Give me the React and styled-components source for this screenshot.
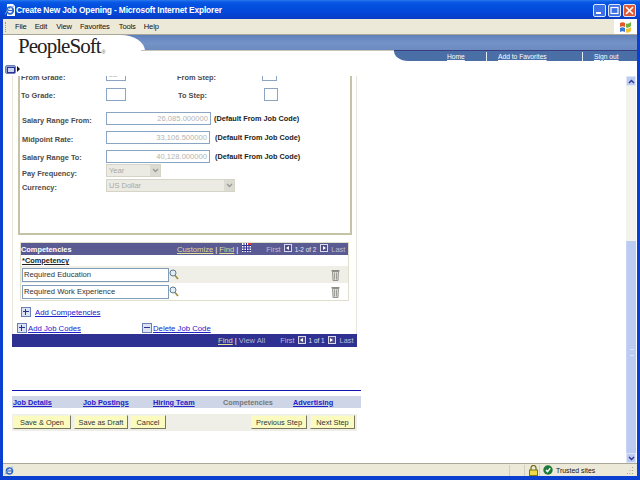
import React from "react";
import styled, { createGlobalStyle } from "styled-components";

const GlobalStyle = createGlobalStyle`
  html, body {
    margin: 0;
    padding: 0;
    background: #fff;
  }
  body {
    font-family: "Liberation Sans", Arial, sans-serif;
    font-size: 7.5px;
    color: #333;
  }
  * {
    box-sizing: border-box;
  }
`;

const Window = styled.div`
  width: 640px;
  height: 480px;
  display: flex;
  flex-direction: column;
  overflow: hidden;
  background: #0a3fd0;
  padding: 0 3px 4px;
`;

const TitleBar = styled.div`
  height: 19px;
  margin: 0 -3px;
  padding: 0 4px;
  display: flex;
  align-items: center;
  background: linear-gradient(#2a78ee 0, #0a5ae6 2px, #0451e0 5px, #0346d8 13px, #0a3cc4 19px);
`;

const TitleText = styled.div`
  flex: 1;
  color: #fff;
  font-weight: bold;
  font-size: 8.4px;
  letter-spacing: -0.15px;
  white-space: nowrap;
`;

const WinButton = styled.div`
  width: 13px;
  height: 13px;
  margin: 2px 0 0 2px;
  border: 1px solid #dfe8fb;
  border-radius: 2px;
  background: ${(p) => (p.$close ? "#de5a35" : "#3d6fe6")};
  display: flex;
  align-items: center;
  justify-content: center;
`;

const MenuBar = styled.div`
  height: 16px;
  display: flex;
  align-items: center;
  background: #ece9d8;
  border-bottom: 1px solid #a9a794;
  color: #111;
  font-size: 7.6px;
  letter-spacing: -0.15px;
`;

const Grip = styled.div`
  width: 2px;
  height: 10px;
  margin-left: 2px;
  border-left: 1px dotted #a09e8c;
`;

const MenuItem = styled.span`
  margin-left: ${(p) => p.$gap}px;
`;

const FlagBox = styled.div`
  margin-left: auto;
  width: 23px;
  height: 15px;
  background: #fff;
  display: flex;
  align-items: center;
  justify-content: center;
`;

const PageArea = styled.div`
  flex: 1;
  min-height: 0;
  display: flex;
  flex-direction: column;
  background: #fff;
`;

const HeaderBand = styled.div`
  height: 16px;
  background: linear-gradient(#5f80ba, #7494c8 50%, #6a8abf);
  display: flex;
`;

const LogoCell = styled.div`
  width: 142px;
  height: 16px;
  background: #fff;
  border-top-right-radius: 24px 16px;
`;

const HeaderNavRow = styled.div`
  height: 11px;
  display: flex;
`;

const LogoSpace = styled.div`
  flex: 1;
  position: relative;
  &::after {
    content: "";
    position: absolute;
    left: 138px;
    right: 0;
    top: -1px;
    height: 1px;
    background: #c9c5b6;
  }
`;

const Logo = styled.div`
  position: absolute;
  left: 15px;
  top: -17px;
  font-family: "Liberation Serif", serif;
  font-size: 21px;
  letter-spacing: -0.95px;
  color: #222;
  white-space: nowrap;
  sup {
    font-family: "Liberation Sans", sans-serif;
    font-size: 5px;
    letter-spacing: 0;
    color: #666;
    margin-left: 1px;
    vertical-align: -1px;
  }
`;

const NavBar = styled.div`
  width: 243px;
  margin-top: -1px;
  height: 11px;
  background: #4a6ea6;
  border-top: 1px solid #3c3c80;
  border-bottom-left-radius: 14px 10px;
  display: flex;
  align-items: center;
  color: #fff;
  font-size: 6.7px;
`;

const NavLink = styled.span`
  width: ${(p) => p.$w}px;
  padding-left: ${(p) => p.$pad}px;
  height: 9px;
  line-height: 9px;
  border-right: ${(p) => (p.$last ? "none" : "1px solid #e8edf5")};
  text-decoration: underline;
  white-space: nowrap;
`;

const CollapseRow = styled.div`
  height: 14px;
  padding: 3px 0 0 2px;
  display: flex;
  align-items: flex-start;
`;

const CollapseIcon = styled.div`
  width: 11px;
  height: 9px;
  background: #8ea4d8;
  border: 1px solid #6c7fb8;
  border-radius: 2px;
  display: flex;
  align-items: center;
  justify-content: center;
  &::before {
    content: "";
    width: 6px;
    height: 4px;
    border: 1px solid #2e3192;
    background: #c8d4f0;
  }
`;

const CollapseArrow = styled.div`
  margin: 1px 0 0 1px;
  width: 0;
  height: 0;
  border-left: 3px solid #111;
  border-top: 3px solid transparent;
  border-bottom: 3px solid transparent;
`;

const Frame = styled.div`
  flex: 1;
  min-height: 0;
  display: flex;
  overflow: hidden;
`;

const Main = styled.div`
  flex: 1;
  padding-left: 9px;
  display: flex;
  flex-direction: column;
`;

const Page = styled.div`
  width: 345px;
  height: 271px;
  overflow: hidden;
  padding: 0 1px;
  box-shadow: inset 1px 0 #e8e6dc, inset -1px 0 #e8e6dc;
  display: flex;
  flex-direction: column;
`;

const FormBox = styled.div`
  margin: -10px 4px 0 5px;
  height: 169px;
  flex-shrink: 0;
  border: 2px solid #c6c2a6;
  padding-left: 1px;
  display: flex;
  flex-direction: column;
`;

const FormRow = styled.div`
  margin-top: ${(p) => p.$top}px;
  height: 13px;
  display: grid;
  grid-template-columns: ${(p) => p.$cols};
  align-items: center;
  flex-shrink: 0;
`;

const Label = styled.label`
  font-weight: bold;
  font-size: 7.4px;
  color: #4c4c4c;
  white-space: nowrap;
  padding-left: ${(p) => p.$pad || 0}px;
  transform: translateY(${(p) => p.$shift || 0}px);
`;

const TextInput = styled.div`
  width: ${(p) => p.$w}px;
  height: 13px;
  border: 1px solid #8aa4c4;
  background: #fff;
  color: #b4b4b0;
  font-size: 7.6px;
  line-height: 11px;
  text-align: ${(p) => (p.$left ? "left" : "right")};
  padding: 0 2px;
  overflow: hidden;
`;

const Note = styled.span`
  padding-left: ${(p) => p.$pad}px;
  font-weight: bold;
  font-size: 7.3px;
  color: #222;
  white-space: nowrap;
`;

const SelectBox = styled.div`
  width: ${(p) => p.$w}px;
  height: 13px;
  background: #ecebe3;
  border: 1px solid #d6d4c6;
  color: #a8a8a4;
  font-size: 7.5px;
  line-height: 11px;
  padding-left: 2px;
  display: flex;
  justify-content: space-between;
`;

const SelectArrow = styled.div`
  width: 10px;
  background: #dcdbd2;
  display: flex;
  align-items: center;
  justify-content: center;
`;

const Grid = styled.div`
  margin: 7px 0 0 7px;
  width: 329px;
  height: 59px;
  flex-shrink: 0;
  border: 1px solid #e0dfcc;
  display: flex;
  flex-direction: column;
`;

const GridHead = styled.div`
  height: 12px;
  background: #5b5b93;
  display: flex;
  align-items: center;
  color: #c0c0d6;
  font-size: 7.7px;
  white-space: nowrap;
`;

const GridTitle = styled.span`
  width: 156px;
  color: #fff;
  font-weight: bold;
  font-size: 7.4px;
`;

const YellowLink = styled.span`
  color: #dcdc98;
  text-decoration: underline;
`;

const Pipe = styled.span`
  margin: 0 2px;
  color: #fff;
`;

const PagerText = styled.span`
  margin-left: ${(p) => p.$left || 0}px;
  color: #bcbcd2;
  font-size: 7.4px;
`;

const PagerCount = styled.span`
  margin-left: 3px;
  color: #e4e4f0;
  font-size: 6.4px;
`;

const ArrowBtn = styled.span`
  display: inline-flex;
  align-items: center;
  justify-content: center;
  width: 8px;
  height: 8px;
  margin-left: ${(p) => p.$left}px;
  margin-top: -2px;
  border: 1px solid #d8d8e8;
  background: #4c4c8c;
  &::before {
    content: "";
    width: 0;
    height: 0;
    border-top: 2px solid transparent;
    border-bottom: 2px solid transparent;
    ${(p) => (p.$next ? "border-left: 3px solid #fff;" : "border-right: 3px solid #fff;")}
  }
`;

const ColumnHead = styled.div`
  height: 11px;
  padding-left: 1px;
  font-weight: bold;
  font-size: 7.4px;
  line-height: 11px;
  color: #222;
  text-decoration: underline;
`;

const GridRow = styled.div`
  height: 17px;
  padding: 0 8px 0 1px;
  display: flex;
  align-items: center;
  background: ${(p) => (p.$shaded ? "#efefe7" : "#fff")};
`;

const NameInput = styled.div`
  width: 147px;
  height: 14px;
  border: 1px solid #7f9db9;
  background: #fff;
  color: #333;
  font-size: 7.65px;
  line-height: 12px;
  padding-left: 1px;
`;

const TrashSlot = styled.span`
  margin-left: auto;
  display: flex;
`;

const AddRow = styled.div`
  margin: ${(p) => p.$top}px 0 0 ${(p) => p.$left}px;
  height: 10px;
  display: flex;
  align-items: center;
  flex-shrink: 0;
`;

const SquareIcon = styled.span`
  width: 10px;
  height: 10px;
  margin-right: ${(p) => p.$gap}px;
  flex-shrink: 0;
  border: 1px solid #6a80b4;
  background: #dce3f2;
  position: relative;
  &::before {
    content: "";
    position: absolute;
    left: 1px;
    right: 1px;
    top: 3px;
    height: 1px;
    background: #2e3192;
  }
  ${(p) =>
    p.$plus &&
    `&::after {
      content: "";
      position: absolute;
      top: 1px;
      bottom: 1px;
      left: 3px;
      width: 1px;
      background: #2e3192;
    }`}
`;

const BlueLink = styled.a`
  color: #2222cc;
  font-size: 7.75px;
  text-decoration: underline;
  white-space: nowrap;
`;

const TabLink = styled(BlueLink)`
  font-weight: bold;
  font-size: 7.3px;
`;

const AddLinks = styled.div`
  width: ${(p) => p.$w}px;
  display: flex;
  align-items: center;
`;

const FootBar = styled.div`
  margin: 1px -1px 0;
  height: 13px;
  flex-shrink: 0;
  background: #2e3192;
  display: flex;
  align-items: center;
  padding-left: 206px;
  color: #b4b4d0;
  font-size: 7.6px;
  white-space: nowrap;
`;

const TabRule = styled.div`
  margin-top: 43px;
  width: 349px;
  height: 1px;
  background: #1414b4;
`;

const Tabs = styled.div`
  margin-top: 5px;
  width: 349px;
  height: 12px;
  background: #cdd5e6;
  display: flex;
  align-items: center;
  padding-left: 1px;
`;

const Tab = styled.span`
  width: ${(p) => p.$w}px;
  flex-shrink: 0;
`;

const MutedTab = styled(Tab)`
  color: #777;
  font-weight: bold;
  font-size: 7.3px;
`;

const ButtonBar = styled.div`
  margin-top: 6px;
  width: 345px;
  height: 17px;
  background: #efefe7;
  padding: 1px 2px 0 1px;
  display: flex;
  align-items: flex-start;
`;

const Button = styled.button`
  width: ${(p) => p.$w}px;
  height: 14px;
  margin-left: ${(p) => p.$left || 0}px;
  padding: 0;
  border: 1px solid;
  border-color: #f4f4e4 #77765f #77765f #f4f4e4;
  background: #fbfbc0;
  color: #333;
  font-family: "Liberation Sans", sans-serif;
  font-size: 7.4px;
  white-space: nowrap;
`;

const Scrollbar = styled.div`
  width: 10px;
  margin-right: 1px;
  display: flex;
  flex-direction: column;
`;

const ScrollButton = styled.div`
  height: 10px;
  background: #bccbf2;
  border: 1px solid #dfe6f8;
  display: flex;
  align-items: center;
  justify-content: center;
`;

const ScrollTrack = styled.div`
  flex: 1;
  background: #f3f2ec;
`;

const ScrollThumb = styled.div`
  height: 212px;
  background: #bccbf2;
  border-left: 1px solid #c8d4f4;
  display: flex;
  align-items: center;
  justify-content: center;
  &::before {
    content: "";
    width: 4px;
    height: 5px;
    margin-top: 10px;
    border-top: 1px solid #dde5fa;
    border-bottom: 1px solid #dde5fa;
  }
`;

const StatusBar = styled.div`
  height: 13px;
  background: #ece9d8;
  border-top: 1px solid #aca899;
  display: flex;
  align-items: center;
  font-size: 6.9px;
  color: #111;
  padding-left: 1px;
`;

const StatusCell = styled.div`
  height: 11px;
  margin-left: ${(p) => p.$left || 0}px;
  width: ${(p) => p.$w}px;
  padding-left: ${(p) => p.$pad || 0}px;
  gap: ${(p) => p.$gap || 0}px;
  border-left: 1px solid #d2cfbd;
  display: flex;
  align-items: center;
  white-space: nowrap;
`;

const GridGlyph = styled.svg`
  margin: -3px 0 0 2px;
`;

const GripGlyph = styled.svg`
  margin: 0 1px 0 auto;
`;

const FlagIcon = () => (
  <svg width="13" height="13" viewBox="0 0 13 13">
    <path d="M1 3q2.500-1.500 5 0v4q-2.500-1.500-5 0z" fill="#e2562a" />
    <path d="M7 3.500q2.500 1 5-1.500v4q-2.500 2.500-5 1.500z" fill="#6cb33f" />
    <path d="M1 8q2.500-1.500 5 0v4q-2.500-1.500-5 0z" fill="#3a78d8" />
    <path d="M7 8.500q2.500 1 5-1.500v4q-2.500 2.500-5 1.500z" fill="#f2c230" />
  </svg>
);

const IeIcon = ({ size, page }) => (
  <svg width={size} height={size} viewBox="0 0 12 12">
    {page && <path d="M3 0h6l2 2v10H3z" fill="#fff" />}
    <circle cx="6" cy="6.500" r="3.300" fill="none" stroke="#2a64c8" strokeWidth="1.700" />
    <path d="M3 6.500h6.500" stroke="#2a64c8" strokeWidth="1.200" />
    <path d="M1 10.500Q4 4 10 2" fill="none" stroke="#7aa6e6" strokeWidth="0.900" />
  </svg>
);

const GridIcon = () => (
  <GridGlyph width="9" height="9" viewBox="0 0 9 9">
    <rect width="9" height="9" fill="#fff" />
    <path d="M0 2.500h9M0 5h9M0 7.500h9M2 0v9M4.500 0v9M7 0v9" stroke="#2e3192" strokeWidth="1" />
    <rect x="6" width="3" height="2" fill="#d83a3a" />
  </GridGlyph>
);

const ChevronDown = ({ color }) => (
  <svg width="7" height="5" viewBox="0 0 7 5">
    <path d="M1 1l2.500 2.500L6 1" fill="none" stroke={color} strokeWidth="1.400" />
  </svg>
);

const ChevronUp = ({ color }) => (
  <svg width="7" height="5" viewBox="0 0 7 5">
    <path d="M1 4l2.500-2.500L6 4" fill="none" stroke={color} strokeWidth="1.400" />
  </svg>
);

const LookupIcon = () => (
  <svg width="10" height="11" viewBox="0 0 10 11">
    <path d="M6 6.500l3 3.500" stroke="#9a8a3a" strokeWidth="1.600" />
    <circle cx="4" cy="4" r="3" fill="#e4edf6" stroke="#5f7a88" strokeWidth="1" />
  </svg>
);

const TrashIcon = () => (
  <svg width="9" height="12" viewBox="0 0 9 12">
    <rect x="0.500" y="1" width="8" height="1.500" fill="#8c8c86" />
    <path d="M1.500 2.500h6L7 11.500H2z" fill="#e0e0d8" stroke="#80807a" strokeWidth="0.800" />
    <path d="M3.500 3.500v7M5.500 3.500v7" stroke="#8c8c86" strokeWidth="0.800" />
  </svg>
);

const LockIcon = () => (
  <svg width="9" height="11" viewBox="0 0 9 11">
    <path d="M2 5V3a2.500 2.500 0 0 1 5 0v2" fill="none" stroke="#6a6a10" strokeWidth="1.200" />
    <rect x="0.500" y="5" width="8" height="5.500" fill="#ecd84a" stroke="#7a7a10" />
  </svg>
);

const TrustedIcon = () => (
  <svg width="10" height="10" viewBox="0 0 10 10">
    <circle cx="5" cy="5" r="4.700" fill="#1e7a3a" />
    <path d="M3 5l1.500 1.600L7.200 3.200" fill="none" stroke="#fff" strokeWidth="1.400" />
  </svg>
);

const GripIcon = () => (
  <GripGlyph width="9" height="9" viewBox="0 0 9 9">
    <path d="M7 1h1v1H7zM4.500 4h1v1h-1zM7 4h1v1H7zM2 7h1v1H2zM4.500 7h1v1h-1zM7 7h1v1H7z" fill="#a9a794" />
  </GripGlyph>
);

const WinGlyph = ({ type }) => (
  <svg width="9" height="9" viewBox="0 0 9 9">
    {type === "min" && <rect x="1" y="6" width="5" height="2" fill="#fff" />}
    {type === "max" && <rect x="1" y="1.500" width="7" height="6" fill="none" stroke="#fff" strokeWidth="1.200" />}
    {type === "close" && <path d="M1 1l7 7M8 1L1 8" stroke="#fff" strokeWidth="1.600" />}
  </svg>
);

const menuItems = [
  ["File", 8],
  ["Edit", 8],
  ["View", 9],
  ["Favorites", 8],
  ["Tools", 9],
  ["Help", 8],
];

const salaryRows = [
  { label: "Salary Range From:", value: "26,085.000000", w: 105, top: 11, shift: 2, note: 3 },
  { label: "Midpoint Rate:", value: "33,106.500000", w: 104, top: 6, shift: 2, note: 4 },
  { label: "Salary Range To:", value: "40,128.000000", w: 104, top: 6, shift: 1, note: 4 },
];

const competencies = ["Required Education", "Required Work Experience"];

function App() {
  return (
    <Window>
      <GlobalStyle />
      <TitleBar>
        <IeIcon size={12} page />
        <TitleText>Create New Job Opening - Microsoft Internet Explorer</TitleText>
        <WinButton><WinGlyph type="min" /></WinButton>
        <WinButton><WinGlyph type="max" /></WinButton>
        <WinButton $close><WinGlyph type="close" /></WinButton>
      </TitleBar>
      <MenuBar>
        <Grip />
        {menuItems.map(([name, gap]) => (
          <MenuItem key={name} $gap={gap}>{name}</MenuItem>
        ))}
        <FlagBox><FlagIcon /></FlagBox>
      </MenuBar>
      <PageArea>
        <HeaderBand>
          <LogoCell />
        </HeaderBand>
        <HeaderNavRow>
          <LogoSpace>
            <Logo>PeopleSoft<sup>®</sup></Logo>
          </LogoSpace>
          <NavBar>
            <NavLink $w={93} $pad={53}>Home</NavLink>
            <NavLink $w={96} $pad={11}>Add to Favorites</NavLink>
            <NavLink $w={54} $pad={11} $last>Sign out</NavLink>
          </NavBar>
        </HeaderNavRow>
        <CollapseRow>
          <CollapseIcon />
          <CollapseArrow />
        </CollapseRow>
        <Frame>
          <Main>
            <Page>
              <FormBox>
                <FormRow $top={0} $cols="85px 71px 85px auto">
                  <Label $shift={3}>From Grade:</Label>
                  <TextInput $w={20} $left>22</TextInput>
                  <Label $shift={3}>From Step:</Label>
                  <TextInput $w={15} />
                </FormRow>
                <FormRow $top={7} $cols="85px 72px 86px auto">
                  <Label $shift={1}>To Grade:</Label>
                  <TextInput $w={20} />
                  <Label $shift={1}>To Step:</Label>
                  <TextInput $w={14} />
                </FormRow>
                {salaryRows.map((row) => (
                  <FormRow key={row.label} $top={row.top} $cols="85px 105px auto">
                    <Label $pad={1} $shift={row.shift}>{row.label}</Label>
                    <TextInput $w={row.w}>{row.value}</TextInput>
                    <Note $pad={row.note}>(Default From Job Code)</Note>
                  </FormRow>
                ))}
                <FormRow $top={1} $cols="85px auto">
                  <Label $pad={1} $shift={3}>Pay Frequency:</Label>
                  <SelectBox $w={55}>Year<SelectArrow><ChevronDown color="#999" /></SelectArrow></SelectBox>
                </FormRow>
                <FormRow $top={2} $cols="85px auto">
                  <Label $pad={1} $shift={2}>Currency:</Label>
                  <SelectBox $w={129}>US Dollar<SelectArrow><ChevronDown color="#999" /></SelectArrow></SelectBox>
                </FormRow>
              </FormBox>
              <Grid>
                <GridHead>
                  <GridTitle>Competencies</GridTitle>
                  <YellowLink>Customize</YellowLink>
                  <Pipe>|</Pipe>
                  <YellowLink>Find</YellowLink>
                  <Pipe>|</Pipe>
                  <GridIcon />
                  <PagerText $left={15}>First</PagerText>
                  <ArrowBtn $left={3} />
                  <PagerCount>1-2 of 2</PagerCount>
                  <ArrowBtn $left={4} $next />
                  <PagerText $left={3}>Last</PagerText>
                </GridHead>
                <ColumnHead>*Competency</ColumnHead>
                {competencies.map((name, i) => (
                  <GridRow key={name} $shaded={i === 0}>
                    <NameInput>{name}</NameInput>
                    <LookupIcon />
                    <TrashSlot><TrashIcon /></TrashSlot>
                  </GridRow>
                ))}
              </Grid>
              <AddRow $top={6} $left={8}>
                <SquareIcon $plus $gap={4} />
                <BlueLink>Add Competencies</BlueLink>
              </AddRow>
              <AddRow $top={6} $left={4}>
                <AddLinks $w={125}>
                  <SquareIcon $plus $gap={1} />
                  <BlueLink>Add Job Codes</BlueLink>
                </AddLinks>
                <AddLinks>
                  <SquareIcon $gap={1} />
                  <BlueLink>Delete Job Code</BlueLink>
                </AddLinks>
              </AddRow>
              <FootBar>
                <YellowLink>Find</YellowLink>
                <Pipe>|</Pipe>
                View All
                <PagerText $left={15}>First</PagerText>
                <ArrowBtn $left={3} />
                <PagerCount>1 of 1</PagerCount>
                <ArrowBtn $left={3} $next />
                <PagerText $left={4}>Last</PagerText>
              </FootBar>
            </Page>
            <TabRule />
            <Tabs>
              <Tab $w={70}><TabLink>Job Details</TabLink></Tab>
              <Tab $w={70}><TabLink>Job Postings</TabLink></Tab>
              <Tab $w={70}><TabLink>Hiring Team</TabLink></Tab>
              <MutedTab $w={70}>Competencies</MutedTab>
              <Tab $w={60}><TabLink>Advertising</TabLink></Tab>
            </Tabs>
            <ButtonBar>
              <Button $w={58}>Save &amp; Open</Button>
              <Button $w={54} $left={3}>Save as Draft</Button>
              <Button $w={36} $left={2}>Cancel</Button>
              <Button $w={56} $left={85}>Previous Step</Button>
              <Button $w={45} $left={3}>Next Step</Button>
            </ButtonBar>
          </Main>
          <Scrollbar>
            <ScrollButton><ChevronUp color="#2e3192" /></ScrollButton>
            <ScrollTrack />
            <ScrollThumb />
            <ScrollButton><ChevronDown color="#2e3192" /></ScrollButton>
          </Scrollbar>
        </Frame>
      </PageArea>
      <StatusBar>
        <IeIcon size={11} />
        <StatusCell $left={494} $w={15} />
        <StatusCell $w={15} $pad={4}><LockIcon /></StatusCell>
        <StatusCell $w={96} $pad={3} $gap={3}><TrustedIcon />Trusted sites<GripIcon /></StatusCell>
      </StatusBar>
    </Window>
  );
}

export default App;
